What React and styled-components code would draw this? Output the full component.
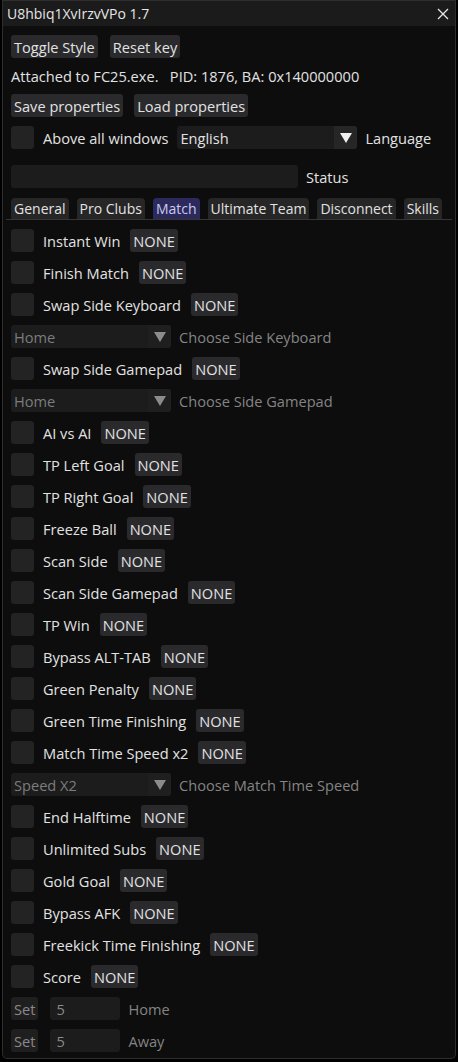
import React from 'react';
import styled, { createGlobalStyle } from 'styled-components';

const GlobalStyle = createGlobalStyle`
  html, body {
    margin: 0;
    padding: 0;
    background: #000;
  }
  body {
    font-family: "Open Sans", "Noto Sans", sans-serif;
    font-size: 14.6px;
    color: #e2e2e2;
  }
`;

const Window = styled.div`
  width: 454px;
  height: 1059px;
  margin-left: 2px;
  background: #0d0d0d;
  border: 1px solid #2e2e2e;
  border-top: none;
  border-radius: 0 0 5px 5px;
  box-sizing: border-box;
  overflow: hidden;
  display: flex;
  flex-direction: column;
`;

const TitleBar = styled.div`
  flex-shrink: 0;
  height: 26px;
  background: #1b1b1b;
  border-top: 1px solid #2e2e2e;
  box-sizing: border-box;
  display: flex;
  align-items: center;
  justify-content: space-between;
  padding: 0 6px 0 4px;
  font-size: 14px;
  color: #e6e6e6;
`;

const Close = styled.svg`
  width: 12px;
  height: 12px;
`;

const Body = styled.div`
  display: flex;
  flex-direction: column;
  padding: 9px 8px 0 8px;
`;

const Row = styled.div`
  flex-shrink: 0;
  display: flex;
  align-items: center;
  height: ${p => p.$h ?? 23}px;
  margin-top: ${p => p.$mt ?? 9}px;
  gap: ${p => p.$gap ?? 8}px;
  &:first-child { margin-top: 0; }
`;

const Button = styled.div`
  height: 23px;
  display: flex;
  align-items: center;
  padding: 0 3px;
  margin-left: ${p => p.$ml || 0}px;
  background: ${p => (p.$dim ? '#1f1f1f' : '#2a2a2d')};
  color: ${p => (p.$dim ? '#8a8a8a' : '#e2e2e2')};
  border-radius: 3px;
  white-space: nowrap;
  box-sizing: border-box;
`;

const Label = styled.span`
  color: ${p => (p.$dim ? '#848484' : '#e2e2e2')};
  white-space: nowrap;
  margin-left: ${p => p.$ml || 0}px;
`;

const Checkbox = styled.div`
  width: 23px;
  height: 23px;
  background: #232323;
  border-radius: 3px;
  flex-shrink: 0;
`;

const Combo = styled.div`
  width: ${p => p.$w}px;
  height: 23px;
  display: flex;
  margin-left: ${p => p.$ml || 0}px;
  background: #1c1c1c;
  border-radius: 3px;
  overflow: hidden;
  flex-shrink: 0;
`;

const ComboText = styled.div`
  flex: 1;
  display: flex;
  align-items: center;
  padding-left: 3px;
  color: ${p => (p.$dim ? '#7c7c7c' : '#e2e2e2')};
`;

const ComboArrow = styled.div`
  width: 23px;
  display: flex;
  align-items: center;
  justify-content: center;
  background: ${p => (p.$dim ? '#1f1f1f' : '#262626')};
`;

const Input = styled.div`
  width: ${p => p.$w}px;
  height: 23px;
  margin-left: ${p => p.$ml || 0}px;
  background: #1c1c1c;
  border-radius: 3px;
  display: flex;
  align-items: center;
  padding-left: 6px;
  box-sizing: border-box;
  color: #8a8a8a;
  flex-shrink: 0;
`;

const Tabs = styled.div`
  flex-shrink: 0;
  display: flex;
  gap: 8px;
  height: 21px;
  margin-top: 10px;
  border-bottom: 1px solid #353535;
  margin-left: -5px;
  margin-right: -5px;
  padding: 0 5px;
  font-size: 14px;
`;

const Tab = styled.div`
  padding: 0 3px;
  height: 21px;
  display: flex;
  align-items: center;
  background: ${p => (p.$active ? '#2c2a5c' : '#262626')};
  color: ${p => (p.$active ? '#c9c9ef' : '#e2e2e2')};
  border-radius: 4px 4px 0 0;
  white-space: nowrap;
`;

const Arrow = ({ dim }) => (
  <svg width="14" height="12" viewBox="0 0 14 12">
    <path d="M1 1 L13 1 L7 11 Z" fill={dim ? '#8c8c8c' : '#f0f0f0'} />
  </svg>
);

const ComboBox = ({ w, value, dim, ml }) => (
  <Combo $w={w} $ml={ml}>
    <ComboText $dim={dim}>{value}</ComboText>
    <ComboArrow $dim={dim}><Arrow dim={dim} /></ComboArrow>
  </Combo>
);

const items = [
  { t: 'check', label: 'Instant Win' },
  { t: 'check', label: 'Finish Match' },
  { t: 'check', label: 'Swap Side Keyboard' },
  { t: 'combo', value: 'Home', label: 'Choose Side Keyboard' },
  { t: 'check', label: 'Swap Side Gamepad' },
  { t: 'combo', value: 'Home', label: 'Choose Side Gamepad' },
  { t: 'check', label: 'AI vs AI' },
  { t: 'check', label: 'TP Left Goal' },
  { t: 'check', label: 'TP Right Goal' },
  { t: 'check', label: 'Freeze Ball' },
  { t: 'check', label: 'Scan Side' },
  { t: 'check', label: 'Scan Side Gamepad' },
  { t: 'check', label: 'TP Win' },
  { t: 'check', label: 'Bypass ALT-TAB' },
  { t: 'check', label: 'Green Penalty' },
  { t: 'check', label: 'Green Time Finishing' },
  { t: 'check', label: 'Match Time Speed x2' },
  { t: 'combo', value: 'Speed X2', label: 'Choose Match Time Speed' },
  { t: 'check', label: 'End Halftime' },
  { t: 'check', label: 'Unlimited Subs' },
  { t: 'check', label: 'Gold Goal' },
  { t: 'check', label: 'Bypass AFK' },
  { t: 'check', label: 'Freekick Time Finishing' },
  { t: 'check', label: 'Score' },
  { t: 'set', label: 'Home' },
  { t: 'set', label: 'Away' },
];

const tabs = ['General', 'Pro Clubs', 'Match', 'Ultimate Team', 'Disconnect', 'Skills'];

export default function App() {
  return (
    <>
      <GlobalStyle />
      <Window>
        <TitleBar>
          <span>U8hbiq1XvIrzvVPo 1.7</span>
          <Close viewBox="0 0 12 12">
            <path d="M1 1 L11 11 M11 1 L1 11" stroke="#e6e6e6" strokeWidth="1.3" />
          </Close>
        </TitleBar>
        <Body>
          <Row $gap={12}>
            <Button>Toggle Style</Button>
            <Button>Reset key</Button>
          </Row>
          <Row $h={18}>
            <Label>Attached to FC25.exe.&nbsp;&nbsp;&nbsp;PID: 1876, BA: 0x140000000</Label>
          </Row>
          <Row $gap={11}>
            <Button>Save properties</Button>
            <Button>Load properties</Button>
          </Row>
          <Row $gap={0}>
            <Checkbox />
            <Label $ml={9}>Above all windows</Label>
            <ComboBox ml={9} w={180} value="English" />
            <Label $ml={8}>Language</Label>
          </Row>
          <Row $mt={16}>
            <Input $w={287} />
            <Label>Status</Label>
          </Row>
          <Tabs>
            {tabs.map(t => (
              <Tab key={t} $active={t === 'Match'}>{t}</Tab>
            ))}
          </Tabs>
          {items.map((it, i) => {
            const mt = i === 0 ? 9 : 9;
            if (it.t === 'check') {
              return (
                <Row key={i} $gap={0} $mt={mt}>
                  <Checkbox />
                  <Label $ml={9}>{it.label}</Label>
                  <Button $ml={10}>NONE</Button>
                </Row>
              );
            }
            if (it.t === 'combo') {
              return (
                <Row key={i} $mt={mt}>
                  <ComboBox w={160} value={it.value} dim />
                  <Label $dim>{it.label}</Label>
                </Row>
              );
            }
            return (
              <Row key={i} $gap={0} $mt={mt}>
                <Button $dim>Set</Button>
                <Input $w={70} $ml={12}>5</Input>
                <Label $dim $ml={8}>{it.label}</Label>
              </Row>
            );
          })}
        </Body>
      </Window>
    </>
  );
}
